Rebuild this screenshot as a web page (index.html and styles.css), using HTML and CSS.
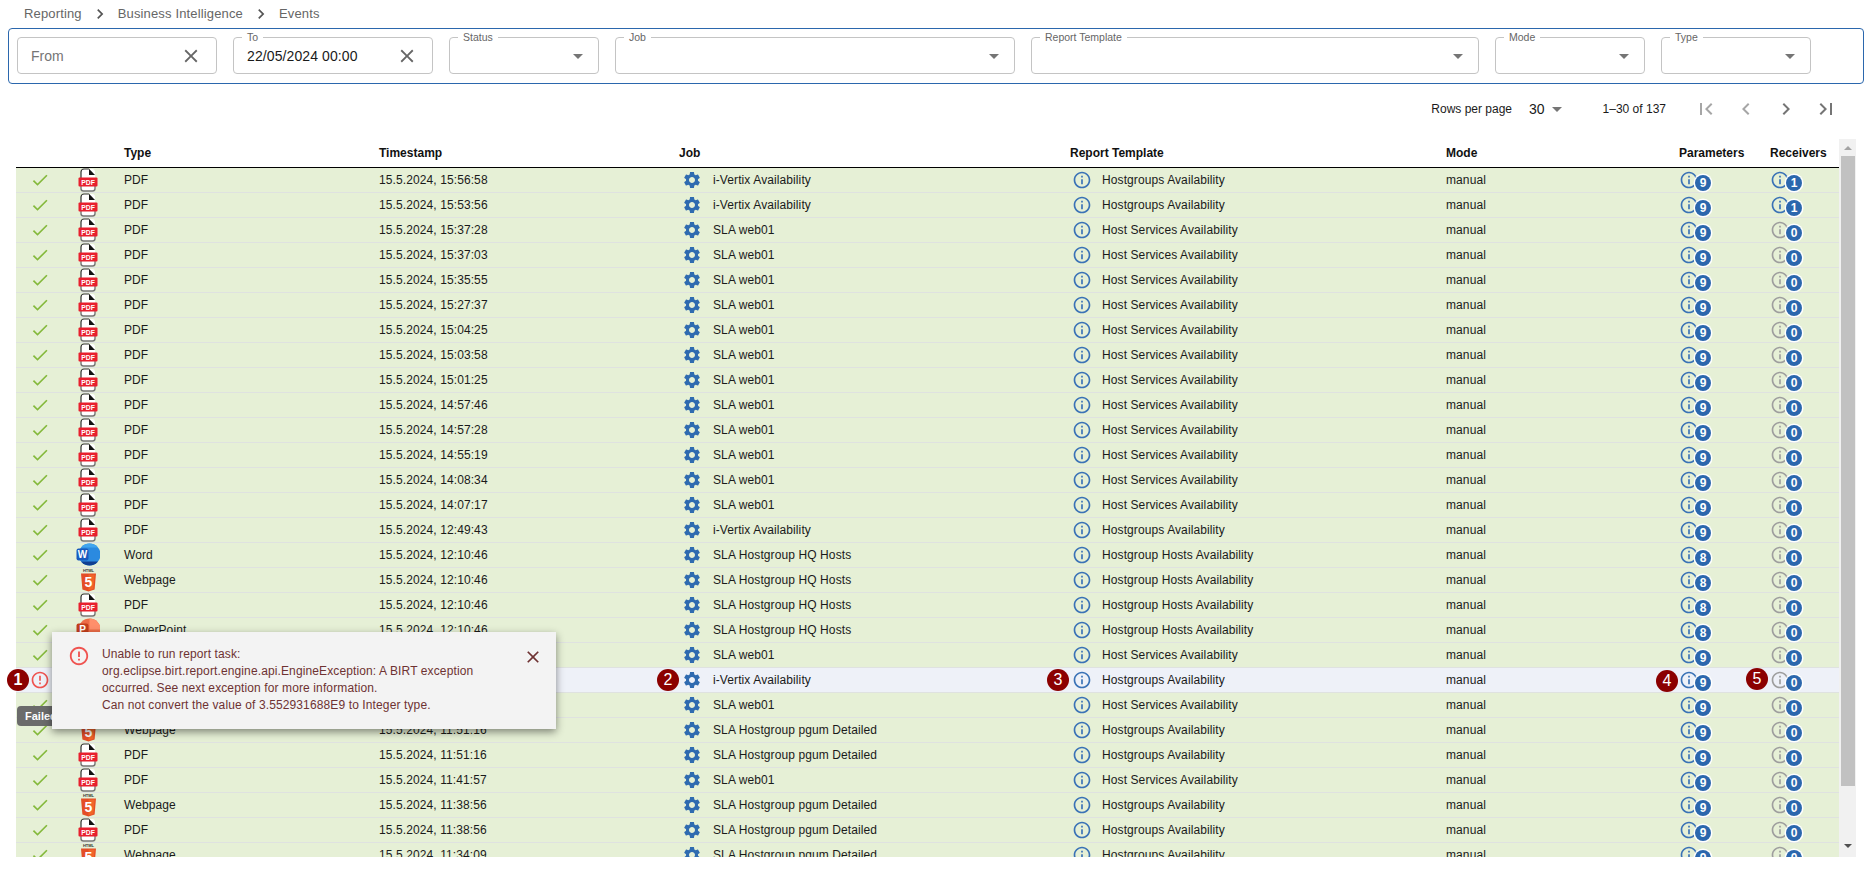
FILE: index.html
```html
<!DOCTYPE html>
<html lang="en">
  <head>
    <meta charset="UTF-8" />
    <title>Events</title>
    <link rel="stylesheet" href="styles.css">
  </head>
  <body>
    <svg class="defs" aria-hidden="true">
      <symbol id="check" viewBox="0 0 24 24"><path d="M9 16.17 4.83 12l-1.42 1.41L9 19 21 7l-1.41-1.41z"/></symbol>
      <symbol id="gear" viewBox="0 0 24 24"><path d="M19.14 12.94c.04-.3.06-.61.06-.94 0-.32-.02-.64-.07-.94l2.03-1.58c.18-.14.23-.41.12-.61l-1.92-3.32c-.12-.22-.37-.29-.59-.22l-2.39.96c-.5-.38-1.03-.7-1.62-.94l-.36-2.54c-.04-.24-.24-.41-.48-.41h-3.84c-.24 0-.43.17-.47.41l-.36 2.54c-.59.24-1.13.57-1.62.94l-2.39-.96c-.22-.08-.47 0-.59.22L2.74 8.87c-.12.21-.08.47.12.61l2.03 1.58c-.05.3-.09.63-.09.94s.02.64.07.94l-2.03 1.58c-.18.14-.23.41-.12.61l1.92 3.32c.12.22.37.29.59.22l2.39-.96c.5.38 1.03.7 1.62.94l.36 2.54c.05.24.24.41.48.41h3.84c.24 0 .44-.17.47-.41l.36-2.54c.59-.24 1.13-.56 1.62-.94l2.39.96c.22.08.47 0 .59-.22l1.92-3.32c.12-.22.07-.47-.12-.61l-2.01-1.58zM12 15.6c-1.98 0-3.6-1.62-3.6-3.6s1.62-3.6 3.6-3.6 3.6 1.62 3.6 3.6-1.62 3.6-3.6 3.6z"/></symbol>
      <symbol id="info" viewBox="0 0 24 24"><path d="M11 7h2v2h-2zm0 4h2v6h-2zm1-9C6.48 2 2 6.48 2 12s4.48 10 10 10 10-4.48 10-10S17.52 2 12 2zm0 18c-4.41 0-8-3.59-8-8s3.59-8 8-8 8 3.59 8 8-3.59 8-8 8z"/></symbol>
      <symbol id="alert" viewBox="0 0 24 24"><path d="M11 15h2v2h-2zm0-8h2v6h-2zm.99-5C6.47 2 2 6.48 2 12s4.47 10 9.99 10C17.52 22 22 17.52 22 12S17.52 2 11.99 2zM12 20c-4.42 0-8-3.58-8-8s3.58-8 8-8 8 3.58 8 8-3.58 8-8 8z"/></symbol>
      <symbol id="close" viewBox="0 0 24 24"><path d="M19 6.41 17.59 5 12 10.59 6.41 5 5 6.41 10.59 12 5 17.59 6.41 19 12 13.41 17.59 19 19 17.59 13.41 12z"/></symbol>
      <symbol id="drop" viewBox="0 0 24 24"><path d="m7 10 5 5 5-5z"/></symbol>
      <symbol id="next" viewBox="0 0 24 24"><path d="M10 6 8.59 7.41 13.17 12l-4.58 4.59L10 18l6-6z"/></symbol>
      <symbol id="prev" viewBox="0 0 24 24"><path d="M15.41 7.41 14 6l-6 6 6 6 1.41-1.41L10.83 12z"/></symbol>
      <symbol id="first" viewBox="0 0 24 24"><path d="M18.41 16.59 13.82 12l4.59-4.59L17 6l-6 6 6 6zM6 6h2v12H6z"/></symbol>
      <symbol id="last" viewBox="0 0 24 24"><path d="M5.59 7.41 10.18 12l-4.59 4.59L7 18l6-6-6-6zM16 6h2v12h-2z"/></symbol>
      <symbol id="pdf" viewBox="0 0 20 24">
        <rect x="3" y="1" width="14" height="22" rx="3" fill="#fff"/>
        <path d="M11 .8 17 7h-6z" fill="#111"/>
        <path d="M3 10V4a3 3 0 0 1 3-3h5" fill="none" stroke="#333" stroke-width="1.2"/>
        <path d="M3 18v2.500A2.500 2.500 0 0 0 5.500 23h9a2.500 2.500 0 0 0 2.500-2.500V18" fill="none" stroke="#777" stroke-width="1.4"/>
        <rect x=".5" y="9.500" width="19" height="9" rx="1" fill="#e8202e"/>
      </symbol>
      <symbol id="word" viewBox="0 0 24 24">
        <circle cx="13.5" cy="11.5" r="11" fill="#2b8ae0"/>
        <path d="M5 4.500a11 11 0 0 1 17 0z" fill="#41a5ee"/>
        <path d="M5 18.500h17a11 11 0 0 1-17 0z" fill="#103f91"/>
        <rect x=".5" y="5.500" width="12" height="12" rx="2" fill="#185abd"/>
      </symbol>
      <symbol id="html" viewBox="0 0 17 24">
        <path d="M1 5.500 2.400 21.500 8.500 23.500l6.100-2L16 5.500z" fill="#e44d26"/>
        <path d="M8.500 6.500v16l4.900-1.600L14.700 6.500z" fill="#f16529"/>
      </symbol>
      <symbol id="ppt" viewBox="0 0 24 24">
        <circle cx="13.5" cy="11.5" r="11" fill="#ed6c47"/>
        <path d="M13.500.5a11 11 0 0 1 11 11h-11z" fill="#ff8f6b"/>
        <rect x=".5" y="5.500" width="12" height="12" rx="2" fill="#c43e1c"/>
      </symbol>
    </svg>

    <nav class="breadcrumb">
      <span>Reporting</span><svg class="crumb-sep"><use href="#next"/></svg>
      <span>Business Intelligence</span><svg class="crumb-sep"><use href="#next"/></svg>
      <span>Events</span>
    </nav>

    <div class="filters">
      <div class="field w-200"><span class="placeholder">From</span><svg class="clear"><use href="#close"/></svg></div>
      <div class="field w-200"><label>To</label><span class="value">22/05/2024 00:00</span><svg class="clear"><use href="#close"/></svg></div>
      <div class="field w-150"><label>Status</label><svg class="caret"><use href="#drop"/></svg></div>
      <div class="field w-400"><label>Job</label><svg class="caret"><use href="#drop"/></svg></div>
      <div class="field w-448"><label>Report Template</label><svg class="caret"><use href="#drop"/></svg></div>
      <div class="field w-150"><label>Mode</label><svg class="caret"><use href="#drop"/></svg></div>
      <div class="field w-150"><label>Type</label><svg class="caret"><use href="#drop"/></svg></div>
    </div>

    <div class="pager">
      <span>Rows per page</span>
      <span class="page-size">30</span><svg class="page-caret"><use href="#drop"/></svg>
      <span class="page-range">1–30 of 137</span>
      <svg class="page-btn off"><use href="#first"/></svg>
      <svg class="page-btn off"><use href="#prev"/></svg>
      <svg class="page-btn"><use href="#next"/></svg>
      <svg class="page-btn"><use href="#last"/></svg>
    </div>

    <div class="table-wrap">
      <div class="table-clip">
        <table class="events">
          <colgroup>
            <col class="c-status"><col class="c-file"><col class="c-type"><col class="c-time"><col class="c-job"><col class="c-report"><col class="c-mode"><col class="c-params"><col class="c-recv">
          </colgroup>
          <thead>
            <tr><th></th><th></th><th>Type</th><th>Timestamp</th><th>Job</th><th>Report Template</th><th>Mode</th><th>Parameters</th><th>Receivers</th></tr>
          </thead>
          <tbody>
            <tr><td><svg class="ok"><use href="#check"/></svg></td><td><svg class="pdf" viewBox="0 0 20 24"><use href="#pdf"/><text x="10" y="16.6">PDF</text></svg></td><td>PDF</td><td>15.5.2024, 15:56:58</td><td><svg class="gear"><use href="#gear"/></svg>i-Vertix Availability</td><td><svg class="info"><use href="#info"/></svg>Hostgroups Availability</td><td>manual</td><td><span class="count"><svg class="info"><use href="#info"/></svg><b>9</b></span></td><td><span class="count"><svg class="info"><use href="#info"/></svg><b>1</b></span></td></tr>
            <tr><td><svg class="ok"><use href="#check"/></svg></td><td><svg class="pdf" viewBox="0 0 20 24"><use href="#pdf"/><text x="10" y="16.6">PDF</text></svg></td><td>PDF</td><td>15.5.2024, 15:53:56</td><td><svg class="gear"><use href="#gear"/></svg>i-Vertix Availability</td><td><svg class="info"><use href="#info"/></svg>Hostgroups Availability</td><td>manual</td><td><span class="count"><svg class="info"><use href="#info"/></svg><b>9</b></span></td><td><span class="count"><svg class="info"><use href="#info"/></svg><b>1</b></span></td></tr>
            <tr><td><svg class="ok"><use href="#check"/></svg></td><td><svg class="pdf" viewBox="0 0 20 24"><use href="#pdf"/><text x="10" y="16.6">PDF</text></svg></td><td>PDF</td><td>15.5.2024, 15:37:28</td><td><svg class="gear"><use href="#gear"/></svg>SLA web01</td><td><svg class="info"><use href="#info"/></svg>Host Services Availability</td><td>manual</td><td><span class="count"><svg class="info"><use href="#info"/></svg><b>9</b></span></td><td><span class="count none"><svg class="info"><use href="#info"/></svg><b>0</b></span></td></tr>
            <tr><td><svg class="ok"><use href="#check"/></svg></td><td><svg class="pdf" viewBox="0 0 20 24"><use href="#pdf"/><text x="10" y="16.6">PDF</text></svg></td><td>PDF</td><td>15.5.2024, 15:37:03</td><td><svg class="gear"><use href="#gear"/></svg>SLA web01</td><td><svg class="info"><use href="#info"/></svg>Host Services Availability</td><td>manual</td><td><span class="count"><svg class="info"><use href="#info"/></svg><b>9</b></span></td><td><span class="count none"><svg class="info"><use href="#info"/></svg><b>0</b></span></td></tr>
            <tr><td><svg class="ok"><use href="#check"/></svg></td><td><svg class="pdf" viewBox="0 0 20 24"><use href="#pdf"/><text x="10" y="16.6">PDF</text></svg></td><td>PDF</td><td>15.5.2024, 15:35:55</td><td><svg class="gear"><use href="#gear"/></svg>SLA web01</td><td><svg class="info"><use href="#info"/></svg>Host Services Availability</td><td>manual</td><td><span class="count"><svg class="info"><use href="#info"/></svg><b>9</b></span></td><td><span class="count none"><svg class="info"><use href="#info"/></svg><b>0</b></span></td></tr>
            <tr><td><svg class="ok"><use href="#check"/></svg></td><td><svg class="pdf" viewBox="0 0 20 24"><use href="#pdf"/><text x="10" y="16.6">PDF</text></svg></td><td>PDF</td><td>15.5.2024, 15:27:37</td><td><svg class="gear"><use href="#gear"/></svg>SLA web01</td><td><svg class="info"><use href="#info"/></svg>Host Services Availability</td><td>manual</td><td><span class="count"><svg class="info"><use href="#info"/></svg><b>9</b></span></td><td><span class="count none"><svg class="info"><use href="#info"/></svg><b>0</b></span></td></tr>
            <tr><td><svg class="ok"><use href="#check"/></svg></td><td><svg class="pdf" viewBox="0 0 20 24"><use href="#pdf"/><text x="10" y="16.6">PDF</text></svg></td><td>PDF</td><td>15.5.2024, 15:04:25</td><td><svg class="gear"><use href="#gear"/></svg>SLA web01</td><td><svg class="info"><use href="#info"/></svg>Host Services Availability</td><td>manual</td><td><span class="count"><svg class="info"><use href="#info"/></svg><b>9</b></span></td><td><span class="count none"><svg class="info"><use href="#info"/></svg><b>0</b></span></td></tr>
            <tr><td><svg class="ok"><use href="#check"/></svg></td><td><svg class="pdf" viewBox="0 0 20 24"><use href="#pdf"/><text x="10" y="16.6">PDF</text></svg></td><td>PDF</td><td>15.5.2024, 15:03:58</td><td><svg class="gear"><use href="#gear"/></svg>SLA web01</td><td><svg class="info"><use href="#info"/></svg>Host Services Availability</td><td>manual</td><td><span class="count"><svg class="info"><use href="#info"/></svg><b>9</b></span></td><td><span class="count none"><svg class="info"><use href="#info"/></svg><b>0</b></span></td></tr>
            <tr><td><svg class="ok"><use href="#check"/></svg></td><td><svg class="pdf" viewBox="0 0 20 24"><use href="#pdf"/><text x="10" y="16.6">PDF</text></svg></td><td>PDF</td><td>15.5.2024, 15:01:25</td><td><svg class="gear"><use href="#gear"/></svg>SLA web01</td><td><svg class="info"><use href="#info"/></svg>Host Services Availability</td><td>manual</td><td><span class="count"><svg class="info"><use href="#info"/></svg><b>9</b></span></td><td><span class="count none"><svg class="info"><use href="#info"/></svg><b>0</b></span></td></tr>
            <tr><td><svg class="ok"><use href="#check"/></svg></td><td><svg class="pdf" viewBox="0 0 20 24"><use href="#pdf"/><text x="10" y="16.6">PDF</text></svg></td><td>PDF</td><td>15.5.2024, 14:57:46</td><td><svg class="gear"><use href="#gear"/></svg>SLA web01</td><td><svg class="info"><use href="#info"/></svg>Host Services Availability</td><td>manual</td><td><span class="count"><svg class="info"><use href="#info"/></svg><b>9</b></span></td><td><span class="count none"><svg class="info"><use href="#info"/></svg><b>0</b></span></td></tr>
            <tr><td><svg class="ok"><use href="#check"/></svg></td><td><svg class="pdf" viewBox="0 0 20 24"><use href="#pdf"/><text x="10" y="16.6">PDF</text></svg></td><td>PDF</td><td>15.5.2024, 14:57:28</td><td><svg class="gear"><use href="#gear"/></svg>SLA web01</td><td><svg class="info"><use href="#info"/></svg>Host Services Availability</td><td>manual</td><td><span class="count"><svg class="info"><use href="#info"/></svg><b>9</b></span></td><td><span class="count none"><svg class="info"><use href="#info"/></svg><b>0</b></span></td></tr>
            <tr><td><svg class="ok"><use href="#check"/></svg></td><td><svg class="pdf" viewBox="0 0 20 24"><use href="#pdf"/><text x="10" y="16.6">PDF</text></svg></td><td>PDF</td><td>15.5.2024, 14:55:19</td><td><svg class="gear"><use href="#gear"/></svg>SLA web01</td><td><svg class="info"><use href="#info"/></svg>Host Services Availability</td><td>manual</td><td><span class="count"><svg class="info"><use href="#info"/></svg><b>9</b></span></td><td><span class="count none"><svg class="info"><use href="#info"/></svg><b>0</b></span></td></tr>
            <tr><td><svg class="ok"><use href="#check"/></svg></td><td><svg class="pdf" viewBox="0 0 20 24"><use href="#pdf"/><text x="10" y="16.6">PDF</text></svg></td><td>PDF</td><td>15.5.2024, 14:08:34</td><td><svg class="gear"><use href="#gear"/></svg>SLA web01</td><td><svg class="info"><use href="#info"/></svg>Host Services Availability</td><td>manual</td><td><span class="count"><svg class="info"><use href="#info"/></svg><b>9</b></span></td><td><span class="count none"><svg class="info"><use href="#info"/></svg><b>0</b></span></td></tr>
            <tr><td><svg class="ok"><use href="#check"/></svg></td><td><svg class="pdf" viewBox="0 0 20 24"><use href="#pdf"/><text x="10" y="16.6">PDF</text></svg></td><td>PDF</td><td>15.5.2024, 14:07:17</td><td><svg class="gear"><use href="#gear"/></svg>SLA web01</td><td><svg class="info"><use href="#info"/></svg>Host Services Availability</td><td>manual</td><td><span class="count"><svg class="info"><use href="#info"/></svg><b>9</b></span></td><td><span class="count none"><svg class="info"><use href="#info"/></svg><b>0</b></span></td></tr>
            <tr><td><svg class="ok"><use href="#check"/></svg></td><td><svg class="pdf" viewBox="0 0 20 24"><use href="#pdf"/><text x="10" y="16.6">PDF</text></svg></td><td>PDF</td><td>15.5.2024, 12:49:43</td><td><svg class="gear"><use href="#gear"/></svg>i-Vertix Availability</td><td><svg class="info"><use href="#info"/></svg>Hostgroups Availability</td><td>manual</td><td><span class="count"><svg class="info"><use href="#info"/></svg><b>9</b></span></td><td><span class="count none"><svg class="info"><use href="#info"/></svg><b>0</b></span></td></tr>
            <tr><td><svg class="ok"><use href="#check"/></svg></td><td><svg class="office" viewBox="0 0 24 24"><use href="#word"/><text x="6.5" y="14.8">W</text></svg></td><td>Word</td><td>15.5.2024, 12:10:46</td><td><svg class="gear"><use href="#gear"/></svg>SLA Hostgroup HQ Hosts</td><td><svg class="info"><use href="#info"/></svg>Hostgroup Hosts Availability</td><td>manual</td><td><span class="count"><svg class="info"><use href="#info"/></svg><b>8</b></span></td><td><span class="count none"><svg class="info"><use href="#info"/></svg><b>0</b></span></td></tr>
            <tr><td><svg class="ok"><use href="#check"/></svg></td><td><svg class="html5" viewBox="0 0 17 24"><use href="#html"/><text x="8.5" y="4.2" class="tag">HTML</text><text x="8.5" y="19">5</text></svg></td><td>Webpage</td><td>15.5.2024, 12:10:46</td><td><svg class="gear"><use href="#gear"/></svg>SLA Hostgroup HQ Hosts</td><td><svg class="info"><use href="#info"/></svg>Hostgroup Hosts Availability</td><td>manual</td><td><span class="count"><svg class="info"><use href="#info"/></svg><b>8</b></span></td><td><span class="count none"><svg class="info"><use href="#info"/></svg><b>0</b></span></td></tr>
            <tr><td><svg class="ok"><use href="#check"/></svg></td><td><svg class="pdf" viewBox="0 0 20 24"><use href="#pdf"/><text x="10" y="16.6">PDF</text></svg></td><td>PDF</td><td>15.5.2024, 12:10:46</td><td><svg class="gear"><use href="#gear"/></svg>SLA Hostgroup HQ Hosts</td><td><svg class="info"><use href="#info"/></svg>Hostgroup Hosts Availability</td><td>manual</td><td><span class="count"><svg class="info"><use href="#info"/></svg><b>8</b></span></td><td><span class="count none"><svg class="info"><use href="#info"/></svg><b>0</b></span></td></tr>
            <tr><td><svg class="ok"><use href="#check"/></svg></td><td><svg class="office" viewBox="0 0 24 24"><use href="#ppt"/><text x="6.5" y="14.8">P</text></svg></td><td>PowerPoint</td><td>15.5.2024, 12:10:46</td><td><svg class="gear"><use href="#gear"/></svg>SLA Hostgroup HQ Hosts</td><td><svg class="info"><use href="#info"/></svg>Hostgroup Hosts Availability</td><td>manual</td><td><span class="count"><svg class="info"><use href="#info"/></svg><b>8</b></span></td><td><span class="count none"><svg class="info"><use href="#info"/></svg><b>0</b></span></td></tr>
            <tr><td><svg class="ok"><use href="#check"/></svg></td><td></td><td></td><td></td><td><svg class="gear"><use href="#gear"/></svg>SLA web01</td><td><svg class="info"><use href="#info"/></svg>Host Services Availability</td><td>manual</td><td><span class="count"><svg class="info"><use href="#info"/></svg><b>9</b></span></td><td><span class="count none"><svg class="info"><use href="#info"/></svg><b>0</b></span></td></tr>
            <tr class="failed"><td><svg class="err"><use href="#alert"/></svg></td><td></td><td></td><td></td><td><svg class="gear"><use href="#gear"/></svg>i-Vertix Availability</td><td><svg class="info"><use href="#info"/></svg>Hostgroups Availability</td><td>manual</td><td><span class="count"><svg class="info"><use href="#info"/></svg><b>9</b></span></td><td><span class="count none"><svg class="info"><use href="#info"/></svg><b>0</b></span></td></tr>
            <tr><td><svg class="ok"><use href="#check"/></svg></td><td></td><td></td><td></td><td><svg class="gear"><use href="#gear"/></svg>SLA web01</td><td><svg class="info"><use href="#info"/></svg>Host Services Availability</td><td>manual</td><td><span class="count"><svg class="info"><use href="#info"/></svg><b>9</b></span></td><td><span class="count none"><svg class="info"><use href="#info"/></svg><b>0</b></span></td></tr>
            <tr><td><svg class="ok"><use href="#check"/></svg></td><td><svg class="html5" viewBox="0 0 17 24"><use href="#html"/><text x="8.5" y="4.2" class="tag">HTML</text><text x="8.5" y="19">5</text></svg></td><td>Webpage</td><td>15.5.2024, 11:51:16</td><td><svg class="gear"><use href="#gear"/></svg>SLA Hostgroup pgum Detailed</td><td><svg class="info"><use href="#info"/></svg>Hostgroups Availability</td><td>manual</td><td><span class="count"><svg class="info"><use href="#info"/></svg><b>9</b></span></td><td><span class="count none"><svg class="info"><use href="#info"/></svg><b>0</b></span></td></tr>
            <tr><td><svg class="ok"><use href="#check"/></svg></td><td><svg class="pdf" viewBox="0 0 20 24"><use href="#pdf"/><text x="10" y="16.6">PDF</text></svg></td><td>PDF</td><td>15.5.2024, 11:51:16</td><td><svg class="gear"><use href="#gear"/></svg>SLA Hostgroup pgum Detailed</td><td><svg class="info"><use href="#info"/></svg>Hostgroups Availability</td><td>manual</td><td><span class="count"><svg class="info"><use href="#info"/></svg><b>9</b></span></td><td><span class="count none"><svg class="info"><use href="#info"/></svg><b>0</b></span></td></tr>
            <tr><td><svg class="ok"><use href="#check"/></svg></td><td><svg class="pdf" viewBox="0 0 20 24"><use href="#pdf"/><text x="10" y="16.6">PDF</text></svg></td><td>PDF</td><td>15.5.2024, 11:41:57</td><td><svg class="gear"><use href="#gear"/></svg>SLA web01</td><td><svg class="info"><use href="#info"/></svg>Host Services Availability</td><td>manual</td><td><span class="count"><svg class="info"><use href="#info"/></svg><b>9</b></span></td><td><span class="count none"><svg class="info"><use href="#info"/></svg><b>0</b></span></td></tr>
            <tr><td><svg class="ok"><use href="#check"/></svg></td><td><svg class="html5" viewBox="0 0 17 24"><use href="#html"/><text x="8.5" y="4.2" class="tag">HTML</text><text x="8.5" y="19">5</text></svg></td><td>Webpage</td><td>15.5.2024, 11:38:56</td><td><svg class="gear"><use href="#gear"/></svg>SLA Hostgroup pgum Detailed</td><td><svg class="info"><use href="#info"/></svg>Hostgroups Availability</td><td>manual</td><td><span class="count"><svg class="info"><use href="#info"/></svg><b>9</b></span></td><td><span class="count none"><svg class="info"><use href="#info"/></svg><b>0</b></span></td></tr>
            <tr><td><svg class="ok"><use href="#check"/></svg></td><td><svg class="pdf" viewBox="0 0 20 24"><use href="#pdf"/><text x="10" y="16.6">PDF</text></svg></td><td>PDF</td><td>15.5.2024, 11:38:56</td><td><svg class="gear"><use href="#gear"/></svg>SLA Hostgroup pgum Detailed</td><td><svg class="info"><use href="#info"/></svg>Hostgroups Availability</td><td>manual</td><td><span class="count"><svg class="info"><use href="#info"/></svg><b>9</b></span></td><td><span class="count none"><svg class="info"><use href="#info"/></svg><b>0</b></span></td></tr>
            <tr><td><svg class="ok"><use href="#check"/></svg></td><td><svg class="html5" viewBox="0 0 17 24"><use href="#html"/><text x="8.5" y="4.2" class="tag">HTML</text><text x="8.5" y="19">5</text></svg></td><td>Webpage</td><td>15.5.2024, 11:34:09</td><td><svg class="gear"><use href="#gear"/></svg>SLA Hostgroup pgum Detailed</td><td><svg class="info"><use href="#info"/></svg>Hostgroups Availability</td><td>manual</td><td><span class="count"><svg class="info"><use href="#info"/></svg><b>9</b></span></td><td><span class="count none"><svg class="info"><use href="#info"/></svg><b>0</b></span></td></tr>
          </tbody>
        </table>
      </div>
      <div class="scrollbar">
        <span class="arrow-up"></span>
        <span class="thumb"></span>
        <span class="arrow-down"></span>
      </div>
    </div>

    <div class="tooltip">Failed</div>

    <div class="toast">
      <svg class="toast-icon"><use href="#alert"/></svg>
      <p class="toast-text">Unable to run report task:<br>org.eclipse.birt.report.engine.api.EngineException: A BIRT exception<br>occurred. See next exception for more information.<br>Can not convert the value of 3.552931688E9 to Integer type.</p>
      <svg class="toast-close"><use href="#close"/></svg>
    </div>

    <span class="mark m1">1</span>
    <span class="mark m2">2</span>
    <span class="mark m3">3</span>
    <span class="mark m4">4</span>
    <span class="mark m5">5</span>
  </body>
</html>
```

FILE: styles.css
```css
:root {
  --blue: #2b67ad;
  --green-row: #e6f0d6;
  --line: #dfe2e0;
  --text: #1a1a1a;
  --muted: #757575;
  --maroon: #8b0000;
}

* {
  margin: 0;
  padding: 0;
  box-sizing: border-box;
}

body {
  position: relative;
  height: 889px;
  overflow: hidden;
  background: white;
  color: var(--text);
  font-family: "Liberation Sans", Arial, sans-serif;
  font-size: 12px;
}

.defs {
  position: absolute;
  width: 0;
  height: 0;
}

/* breadcrumb */
.breadcrumb {
  display: flex;
  align-items: center;
  height: 28px;
  padding-left: 24px;
  padding-bottom: 1px;
  font-size: 13px;
  letter-spacing: 0.15px;
  color: #666;
}

.crumb-sep {
  width: 20px;
  height: 20px;
  margin: 0 8px;
  fill: #555;
}

/* filter panel */
.filters {
  display: flex;
  gap: 16px;
  width: 1856px;
  height: 56px;
  margin-left: 8px;
  padding: 8px;
  border: 1px solid var(--blue);
  border-radius: 4px;
}

.field {
  position: relative;
  display: flex;
  align-items: center;
  justify-content: space-between;
  height: 37px;
  padding: 0 13px;
  border: 1px solid #c4c4c4;
  border-radius: 4px;
  font-size: 14px;
}

.field label {
  position: absolute;
  top: -7px;
  left: 8px;
  padding: 0 5px;
  background: white;
  color: #666;
  font-size: 10.5px;
  line-height: 12px;
}

.w-150 { width: 150px; }
.w-200 { width: 200px; }
.w-400 { width: 400px; }
.w-448 { width: 448px; }

.placeholder {
  color: var(--muted);
}

.value {
  letter-spacing: 0.1px;
}

.clear {
  width: 22px;
  height: 22px;
  margin-right: 1px;
  fill: #666;
}

.caret {
  width: 24px;
  height: 24px;
  margin-left: auto;
  margin-right: -5px;
  fill: var(--muted);
}

/* pager */
.pager {
  display: flex;
  align-items: center;
  justify-content: flex-end;
  height: 50px;
  margin-bottom: 5px;
  padding-right: 34px;
}

.page-size {
  margin-left: 17px;
  font-size: 14px;
}

.page-caret {
  width: 24px;
  height: 24px;
  fill: var(--muted);
}

.page-range {
  margin: 0 28px 0 34px;
}

.page-btn {
  width: 24px;
  height: 24px;
  margin-left: 16px;
  fill: var(--muted);
}

.page-range + .page-btn {
  margin-left: 0;
}

.page-btn.off {
  fill: #a6a6a6;
}

/* table */
.table-wrap {
  display: flex;
  width: 1840px;
  height: 718px;
  margin-left: 16px;
}

.table-clip {
  flex: 1;
  overflow: hidden;
}

.events {
  width: 1823px;
  table-layout: fixed;
  border-collapse: separate;
  border-spacing: 0;
}

.c-status, .c-file { width: 48px; }
.c-type { width: 255px; }
.c-time { width: 300px; }
.c-job { width: 391px; }
.c-report { width: 376px; }
.c-mode { width: 233px; }
.c-params { width: 91px; }
.c-recv { width: 81px; }

.events th {
  height: 29px;
  padding: 0 0 1px 12px;
  border-bottom: 1px solid black;
  color: #111;
  font-size: 12px;
  font-weight: bold;
  text-align: left;
}

.events td {
  height: 25px;
  padding: 0 0 0 12px;
  border-bottom: 1px solid var(--line);
  background: var(--green-row);
  letter-spacing: 0.1px;
  white-space: nowrap;
}

.events td:nth-child(-n+2) {
  padding: 0;
}

.events .failed td {
  background: #eef1f8;
}

.events td svg text {
  fill: white;
  font-family: "Liberation Sans", sans-serif;
  font-weight: bold;
  letter-spacing: 0;
  text-anchor: middle;
}

.ok, .err {
  display: block;
  width: 20px;
  height: 20px;
  margin: 0 auto;
  fill: #84b93b;
}

.err {
  fill: #ef5350;
}

.pdf {
  display: block;
  width: 20px;
  height: 24px;
  margin: 0 auto;
  font-size: 6.8px;
}

.office {
  display: block;
  width: 24px;
  height: 24px;
  margin: 0 auto;
  font-size: 10px;
}

.html5 {
  display: block;
  width: 17px;
  height: 24px;
  margin: 0 auto;
  font-size: 14px;
}

.events td svg text.tag {
  fill: #333;
  font-size: 4px;
}

/* row icons sit on the text line without making it taller */
.gear {
  width: 20px;
  height: 20px;
  margin: -3px 11px -3px 3px;
  vertical-align: top;
  fill: #2f6bb0;
}

.info {
  width: 20px;
  height: 20px;
  margin: -3px 10px -3px 2px;
  vertical-align: top;
  fill: #3a72b6;
}

.count {
  position: relative;
  display: inline-block;
  width: 20px;
  height: 20px;
  margin: -3px 0;
  vertical-align: top;
}

.count .info {
  display: block;
  margin: 0;
}

.count.none .info {
  fill: #9e9e9e;
}

.count b {
  position: absolute;
  top: 5px;
  left: 16px;
  width: 16px;
  height: 16px;
  border-radius: 50%;
  background: var(--blue);
  box-shadow: 0 0 0 1.5px white;
  color: white;
  font-size: 12px;
  line-height: 16px;
  letter-spacing: 0;
  text-align: center;
}

/* fake scrollbar */
.scrollbar {
  display: flex;
  flex-direction: column;
  align-items: center;
  width: 17px;
  background: #f1f1f1;
}

.arrow-up, .arrow-down {
  width: 0;
  height: 0;
  border-left: 4px solid transparent;
  border-right: 4px solid transparent;
}

.arrow-up {
  margin: 7px 0 6px;
  border-bottom: 4px solid #a3a3a3;
}

.arrow-down {
  margin-top: 58px;
  border-top: 4px solid #505050;
}

.thumb {
  width: 14px;
  height: 630px;
  background: #c1c1c1;
}

/* tooltip and error toast over the table */
.tooltip {
  position: absolute;
  top: 706px;
  left: 17px;
  width: 50px;
  height: 20px;
  padding-left: 8px;
  border-radius: 4px;
  background: #6b6b6b;
  color: white;
  font-size: 11px;
  font-weight: bold;
  line-height: 20px;
}

.toast {
  position: absolute;
  top: 632px;
  left: 52px;
  display: flex;
  width: 504px;
  height: 97px;
  background: #f3f3f3;
  box-shadow: 0 3px 8px rgba(0, 0, 0, 0.45);
  color: #6e3232;
}

.toast-icon {
  flex: none;
  width: 22px;
  height: 22px;
  margin: 13px 12px 0 16px;
  fill: #ef5350;
}

.toast-text {
  flex: 1;
  padding-top: 14px;
  font-size: 12px;
  line-height: 17px;
  letter-spacing: 0.12px;
}

.toast-close {
  flex: none;
  width: 20px;
  height: 20px;
  margin: 15px 13px 0 0;
  fill: #6e3232;
}

/* numbered callouts on the screenshot */
.mark {
  position: absolute;
  width: 22px;
  height: 22px;
  border-radius: 50%;
  background: var(--maroon);
  color: white;
  font-size: 16px;
  line-height: 22px;
  text-align: center;
}

.m1 { top: 669px; left: 7px; font-weight: bold; }
.m2 { top: 669px; left: 657px; }
.m3 { top: 669px; left: 1047px; }
.m4 { top: 670px; left: 1656px; }
.m5 { top: 668px; left: 1746px; }
```
